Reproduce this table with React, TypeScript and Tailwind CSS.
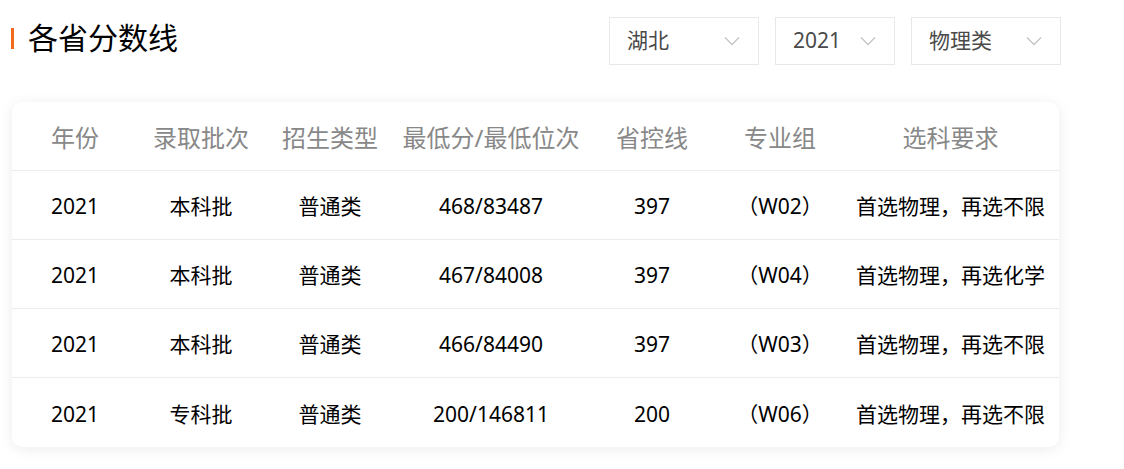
const font = { fontFamily: '"Noto Sans", "Noto Sans CJK SC", sans-serif' }

const rows = [
  { year: '2021', batch: '本科批', type: '普通类', score: '468/83487', line: '397', group: '（W02）', req: '首选物理，再选不限' },
  { year: '2021', batch: '本科批', type: '普通类', score: '467/84008', line: '397', group: '（W04）', req: '首选物理，再选化学' },
  { year: '2021', batch: '本科批', type: '普通类', score: '466/84490', line: '397', group: '（W03）', req: '首选物理，再选不限' },
  { year: '2021', batch: '专科批', type: '普通类', score: '200/146811', line: '200', group: '（W06）', req: '首选物理，再选不限' },
]

const heads = ['年份', '录取批次', '招生类型', '最低分/最低位次', '省控线', '专业组', '选科要求']

const cols = 'grid grid-cols-[126px_126px_132px_190px_132px_124px_1fr]'

function Chevron() {
  return (
    <svg width="16" height="10" viewBox="0 0 16 10" fill="none" stroke="#c4c4c4" strokeWidth="1.3">
      <path d="M1 1.5 L8 8.5 L15 1.5" />
    </svg>
  )
}

function Select({ label, width }: { label: string; width: string }) {
  return (
    <div className={`${width} h-[48px] border border-[#e8e8e8] bg-white flex items-center justify-between pl-[17px] pr-[18px]`}>
      <span className="text-[21px] text-[#4a4a4a]">{label}</span>
      <Chevron />
    </div>
  )
}

export default function App() {
  return (
    <div className="w-[1124px] h-[469px] bg-white" style={font}>
      <div className="flex items-start justify-between pl-[11px] pr-[63px] pt-[17px]">
        <div className="flex items-center gap-[14px] pt-[3px]">
          <div className="w-[3px] h-[21px] bg-[#f26a1b]" />
          <h1 className="text-[30px] leading-[36px] text-black">各省分数线</h1>
        </div>
        <div className="flex gap-[16px] pl-[2px]">
          <Select label="湖北" width="w-[150px]" />
          <Select label="2021" width="w-[120px]" />
          <Select label="物理类" width="w-[150px]" />
        </div>
      </div>

      <div className="mt-[37px] ml-[12px] w-[1047px] bg-white rounded-[10px] shadow-[0_2px_14px_rgba(0,0,0,0.08)] overflow-hidden">
        <div className={`${cols} h-[69px] pt-[4px] items-center border-b border-[#ececec]`}>
          {heads.map((h) => (
            <div key={h} className="text-center text-[24px] text-[#888]">{h}</div>
          ))}
        </div>
        {rows.map((r, i) => (
          <div
            key={i}
            className={`${cols} h-[69px] pt-[4px] items-center text-[21px] text-black ${i < rows.length - 1 ? 'border-b border-[#ececec]' : ''}`}
          >
            <div className="text-center">{r.year}</div>
            <div className="text-center">{r.batch}</div>
            <div className="text-center">{r.type}</div>
            <div className="text-center">{r.score}</div>
            <div className="text-center">{r.line}</div>
            <div className="text-center">{r.group}</div>
            <div className="text-center whitespace-nowrap">{r.req}</div>
          </div>
        ))}
      </div>
    </div>
  )
}
